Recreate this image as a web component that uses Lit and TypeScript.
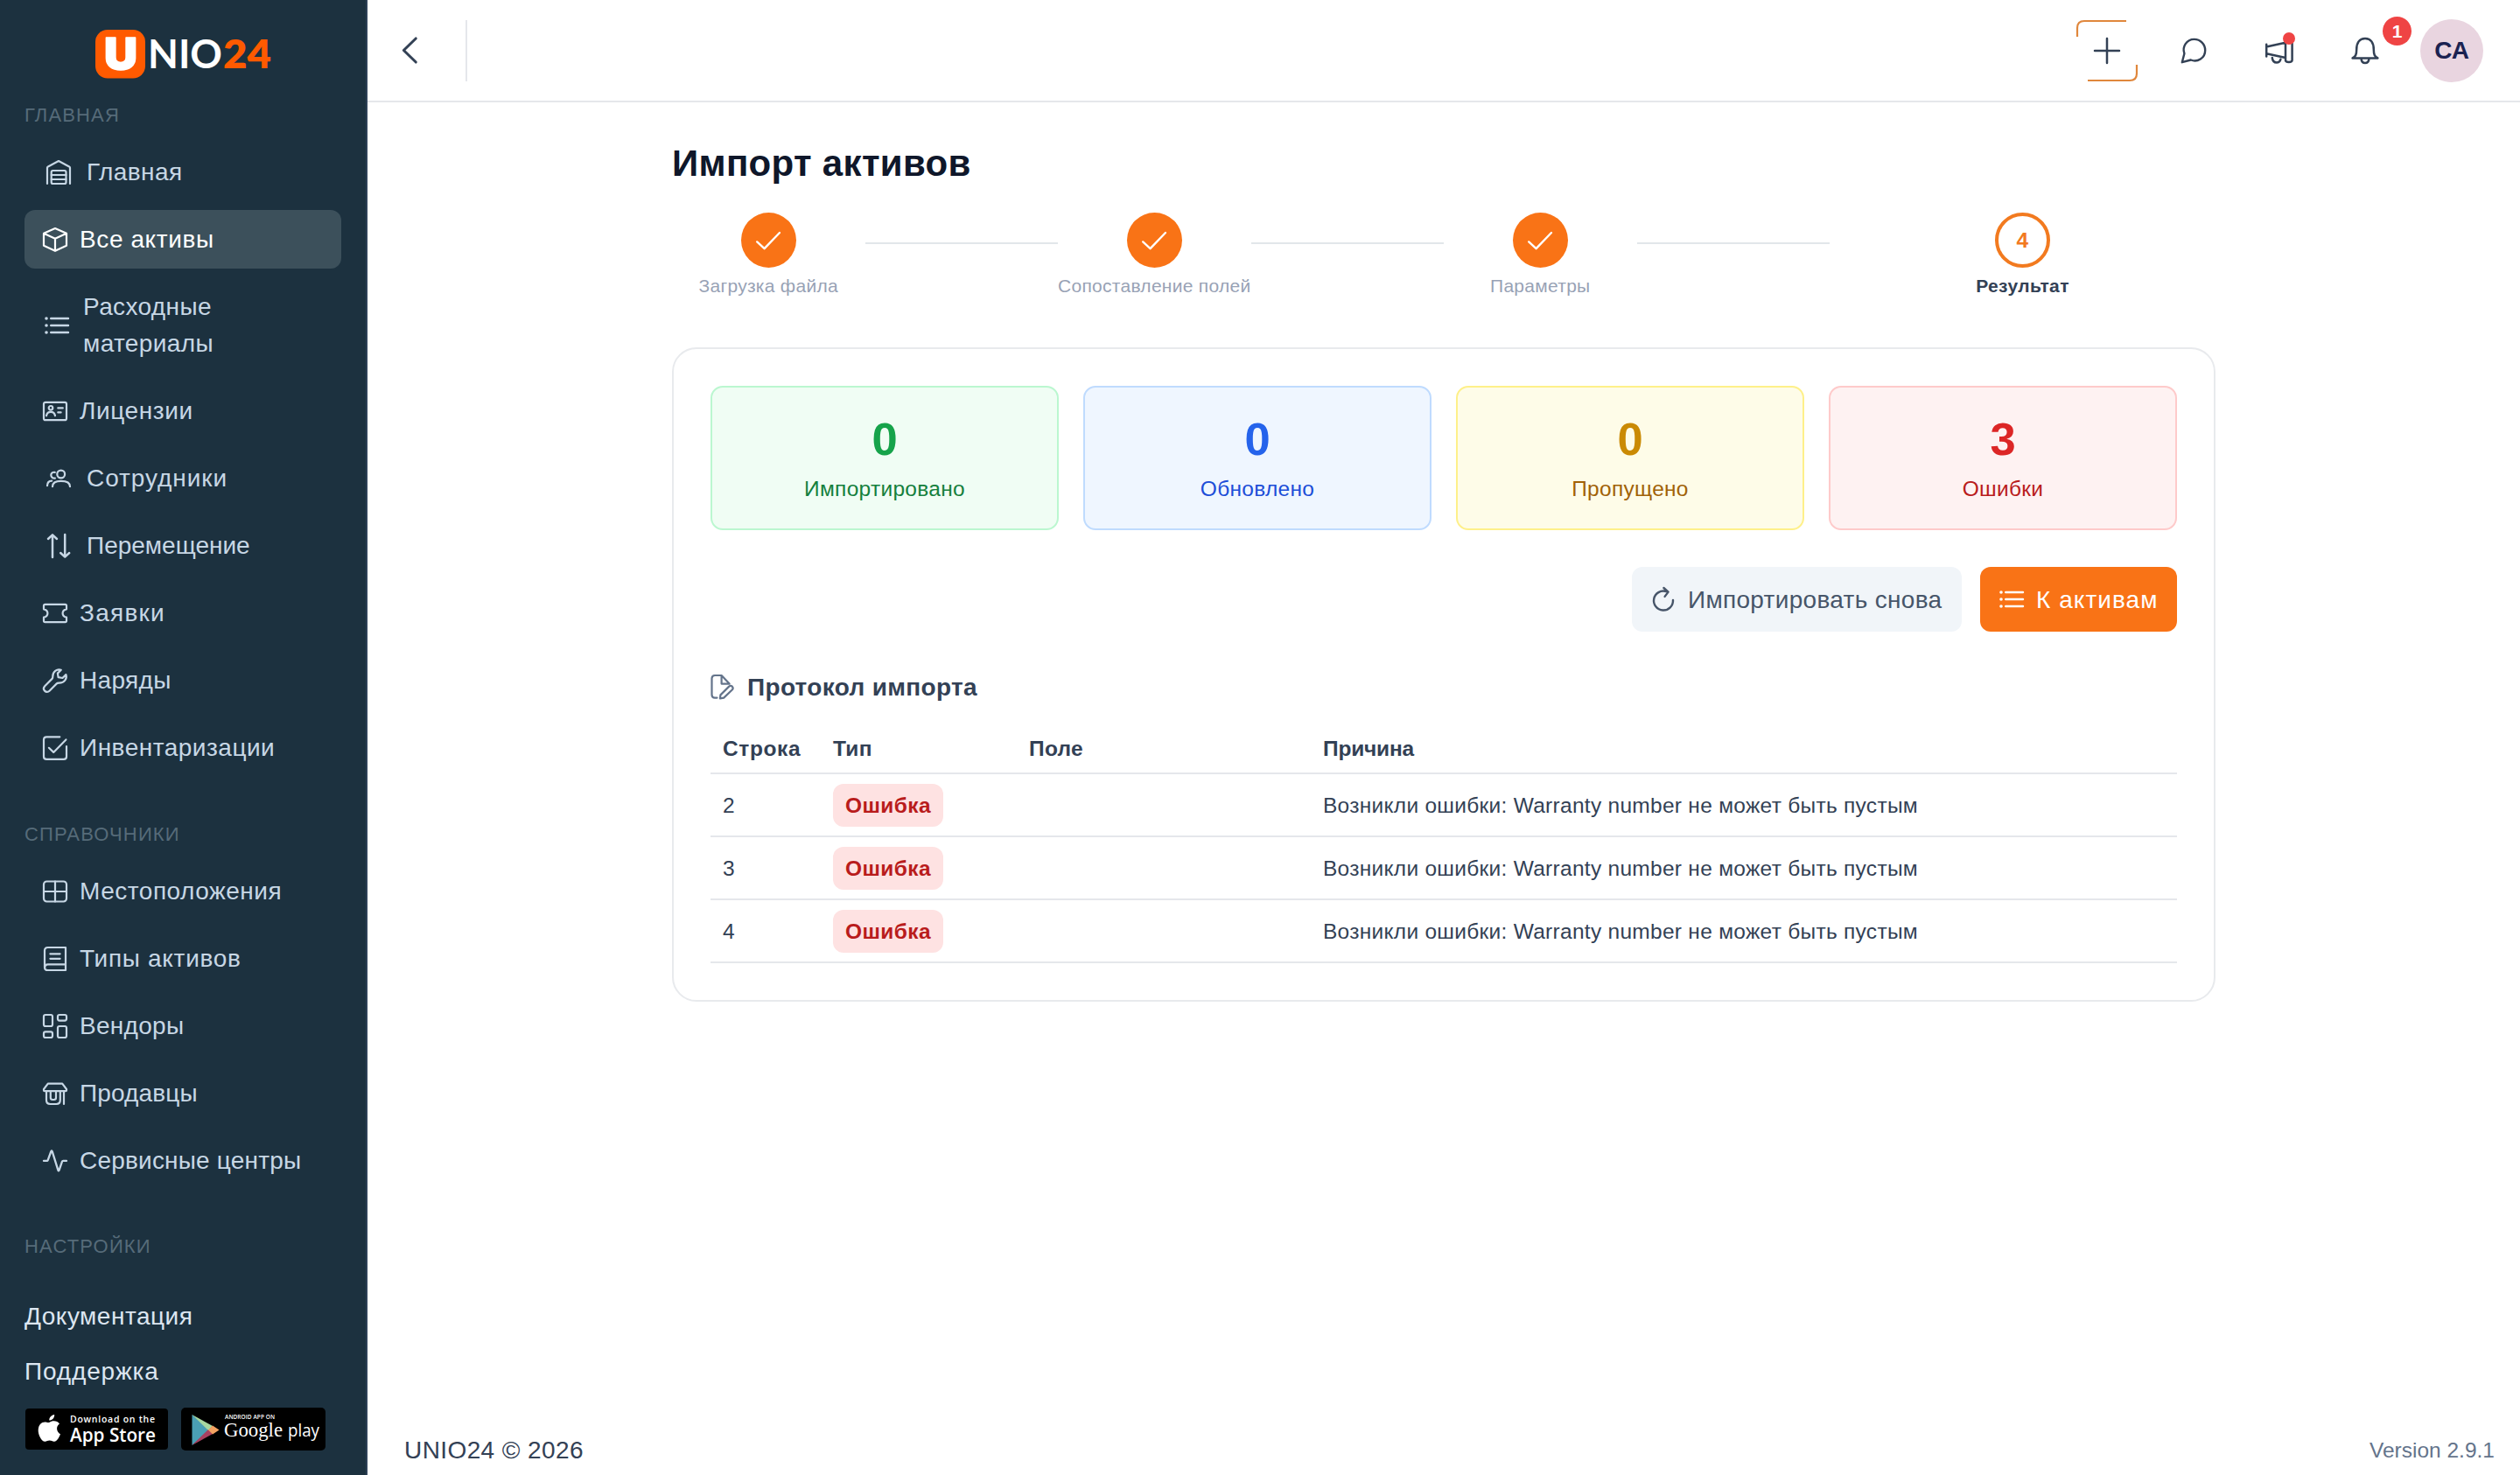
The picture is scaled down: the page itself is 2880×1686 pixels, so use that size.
import { LitElement, html, css, svg, TemplateResult, SVGTemplateResult } from "lit";
import { customElement } from "lit/decorators.js";
import { classMap } from "lit/directives/class-map.js";
import { styleMap } from "lit/directives/style-map.js";

const icon = (body: SVGTemplateResult, cls = "ic"): TemplateResult =>
  html`<svg class=${cls} viewBox="0 0 28 28" aria-hidden="true">${body}</svg>`;

const ICONS: Record<string, SVGTemplateResult> = {
  warehouse: svg`<path d="M1 27V8.8Q1 7.9 1.9 7.4L14 1.1L26.1 7.4Q27 7.9 27 8.8V27"/><rect x="5.7" y="12" width="16.8" height="15" rx="1.8"/><path d="M5.7 17H22.5M5.7 22H22.5"/>`,
  box: svg`<path d="M14 1.1L27 6.8V20.8L14 26.8L1 20.8V6.8ZM1 6.8L14 12.8L27 6.8M14 12.8V26.8"/>`,
  list: svg`<path d="M7.2 6H27M7.2 14H27M7.2 22H27" stroke-width="2.4"/><g fill="currentColor" stroke="none"><circle cx="2" cy="6" r="1.8"/><circle cx="2" cy="14" r="1.8"/><circle cx="2" cy="22" r="1.8"/></g>`,
  card: svg`<rect x="1" y="3.8" width="26" height="20.4" rx="2"/><circle cx="9" cy="10.3" r="2.3"/><path d="M4 19.2C4.6 15.8 6.5 14.8 9 14.8S13.4 15.8 14 19.2M17.3 10.4H22.8M17.3 15.4H20.6"/>`,
  users: svg`<circle cx="16.7" cy="9" r="4.4"/><path d="M7 23.2C7 18.6 11 16.9 16.7 16.9S27 18.6 27 23.2M9.9 13.6C7.4 14 5.3 12.4 5.3 10.1S7.4 6.3 9.7 6.9M1 22.2C1 18.6 2.8 16.8 6.2 16.6"/>`,
  swap: svg`<path d="M7 27V1.6M2 6L7 1.4L12 6M21.2 1V26.4M16.2 22L21.2 26.6L26.2 22" stroke-width="2.5"/>`,
  ticket: svg`<path d="M2.6 3.9H25.4Q27 3.9 27 5.5V9.3C24 9.9 22.6 11.7 22.6 14S24 18.1 27 18.7V22.5Q27 24.1 25.4 24.1H2.6Q1 24.1 1 22.5V18.7C4 18.1 5.4 16.3 5.4 14S4 9.9 1 9.3V5.5Q1 3.9 2.6 3.9Z"/>`,
  wrench: svg`<path d="M20.8 1.7C16 .3 11.1 3.6 11.3 9.3Q11.4 11 10.5 11.9L2.2 20.2C.6 21.8 .6 24 2 25.6C3.6 27.2 6 27.2 7.5 25.7L15.8 17.4Q16.7 16.5 18.4 16.6C24.6 16.8 28 11.7 26.4 7.1L22.5 11L17.6 10.2L16.9 5.6Z"/>`,
  check: svg`<path d="M19.3 1.3H4.2Q1 1.3 1 4.5V23.7Q1 26.9 4.2 26.9H23.8Q27 26.9 27 23.7V12.2M6.9 13.8L12.2 18.9L26.4 4.4"/>`,
  window: svg`<rect x="1" y="2.5" width="26" height="23" rx="3.4"/><path d="M14 2.5V25.5M1 14H27"/>`,
  book: svg`<path d="M26 1H5.6Q2 1 2 4.6V23.4Q2 27 5.6 27H26V1ZM2.2 24.2Q2.2 20.3 5.8 20.3H26M8.4 8.3H19.6M8.4 13.8H19.6"/>`,
  dash: svg`<rect x="1" y="1" width="10" height="13" rx="2"/><rect x="17" y="1" width="10" height="6.6" rx="2"/><rect x="1" y="20.4" width="10" height="6.6" rx="2"/><rect x="17" y="14" width="10" height="13" rx="2"/>`,
  store: svg`<path d="M5.8 2.7H22.2L27 9V10.6Q27 11.2 26 11.2H2Q1 11.2 1 10.6V9ZM4 11.2V21.6Q4 26 8.4 26H15.4Q19.8 26 19.8 21.6V11.2M8.8 11.2V18.8Q8.8 21 11 21H12.8Q15 21 15 18.8V11.2M24 11.2V26"/>`,
  pulse: svg`<path d="M1 13.9H4.8Q5.4 13.9 5.7 13.1L9.4 3Q10.1 1.8 10.7 3.2L17.4 24.7Q18 25.9 18.6 24.6L22 14.7Q22.3 13.9 23.2 13.9H27" stroke-width="2.3"/>`,
  tick: svg`<path d="M1.2 15.4L9.6 23.2L27 5" stroke-width="2.4"/>`,
  redo: svg`<path d="M25 14.9A11 11 0 1 1 17.4 5.1M14.4 1L19.6 5.6L15.6 10.9" stroke-width="2.4"/>`,
  file: svg`<path d="M7.5 26.6H5Q1.5 26.6 1.5 23V4.6Q1.5 1 5 1H12.6L21.6 10.6M12.6 1V10.6H21.6M11.4 23.4L21.2 13.6Q23 12.2 24.8 13.7Q26.4 15.4 25 17.3L15.2 26.6L10.9 27.4Z"/>`,
  back: svg`<path d="M21 0L6.6 14L21 28" stroke-width="3.2"/>`,
  plus: svg`<path d="M14 0V28M0 14H28" stroke-width="2.5"/>`,
  chat: svg`<path d="M.8 27.2L3.4 17.2C.6 9.4 6 .9 14.6 .9C21.8 .9 27.2 6.6 27.2 13.4C27.2 22.4 18.4 27.6 10.8 24.5Z" stroke-width="2.4"/>`,
  bell: svg`<path d="M-.4 22.4C3 20.6 4.2 18.6 4.2 12.6C4.2 5.2 7.4 0 14 0S23.8 5.2 23.8 12.6C23.8 18.6 25 20.6 28.400 22.4ZM9.5 22.8C9.8 26.4 11.6 28 14 28S18.2 26.4 18.5 22.8" stroke-width="2.5"/>`,
};

interface Item { label: string; icon: string; track: number; kind?: string; active?: boolean }

const MAIN: Item[] = [
  { label: "Главная", icon: "warehouse", track: 0.43, kind: "wide" },
  { label: "Все активы", icon: "box", track: 0.6, active: true },
  { label: "Расходные материалы", icon: "list", track: 0.38, kind: "mid" },
  { label: "Лицензии", icon: "card", track: 0.62 },
  { label: "Сотрудники", icon: "users", track: 0.95, kind: "wide" },
  { label: "Перемещение", icon: "swap", track: 0, kind: "wide" },
  { label: "Заявки", icon: "ticket", track: 1.25 },
  { label: "Наряды", icon: "wrench", track: 0.35 },
  { label: "Инвентаризации", icon: "check", track: 0.5 },
];
const REFS: Item[] = [
  { label: "Местоположения", icon: "window", track: 0.52 },
  { label: "Типы активов", icon: "book", track: 0.7 },
  { label: "Вендоры", icon: "dash", track: 0.3 },
  { label: "Продавцы", icon: "store", track: 0.15 },
  { label: "Сервисные центры", icon: "pulse", track: 0.2 },
];
const STEPS = ["Загрузка файла", "Сопоставление полей", "Параметры", "Результат"];
const STATS = [
  { n: 0, label: "Импортировано", tone: "green" },
  { n: 0, label: "Обновлено", tone: "blue" },
  { n: 0, label: "Пропущено", tone: "yellow" },
  { n: 3, label: "Ошибки", tone: "red" },
];
const ROWS = [2, 3, 4];
const REASON = "Возникли ошибки: Warranty number не может быть пустым";

@customElement("app-root")
export class AppRoot extends LitElement {
  static styles = css`
    :host { display: block; font-family: "Liberation Sans", Arial, sans-serif; font-size: 28px; color: #334155; }
    * { box-sizing: border-box; }
    svg { display: block; flex: none; fill: none; stroke: currentColor; stroke-width: 2.2; stroke-linecap: round; stroke-linejoin: round; overflow: visible; }
    .ic { width: 28px; height: 28px; }
    .app { display: flex; width: 2880px; height: 1686px; overflow: hidden; background: #fff; }
    .side { width: 420px; flex: none; background: #1c313f; border-right: 2px solid #2d4157; display: flex; flex-direction: column; color: #c7d7e5; }
    .logo { height: 114px; padding: 34px 0 0 109px; }
    .logo svg { width: 202px; height: 56px; stroke: none; }
    .u { font: 900 50px Inter, sans-serif; fill: #fff; stroke: #fff; stroke-width: 1.5px; }
    .nio { font: 700 46px Lato, sans-serif; fill: #fff; }
    .n24 { font: 800 46px Lato, sans-serif; fill: #ff5a00; }
    .sec { padding-left: 28px; font-size: 22px; line-height: 36px; color: #566b79; letter-spacing: 1.15px; }
    .nav { padding: 13px 28px 0; display: flex; flex-direction: column; gap: 10px; }
    .item { display: flex; align-items: center; gap: 14px; min-height: 67px; padding: 12.5px 21px; line-height: 42px; border-radius: 12px; width: 362px; }
    .item.wide { padding-left: 25px; gap: 18px; }
    .item.mid { padding-left: 23px; gap: 16px; }
    .item.mid span { width: 180px; }
    .item.active { background: #3c505b; color: #fff; }
    .sec.second { margin-top: 48px; }
    .sec.third { margin-top: 47px; }
    .links { padding: 41px 28px 0; display: flex; flex-direction: column; gap: 21px; line-height: 42px; color: #dce6f1; letter-spacing: 0.5px; }
    .links .wider { letter-spacing: 0.85px; }
    .stores { display: flex; align-items: center; gap: 15px; padding: 20px 0 0 27px; }
    .stores svg { stroke: none; }
    .as { width: 163px; height: 47px; margin-left: 2px; }
    .gp { width: 165px; height: 49px; }
    .st { font-family: "Open Sans", sans-serif; font-weight: 600; fill: #fff; }
    .st.thin { font-weight: 400; }
    .st.serif { font-family: "Liberation Serif", serif; font-weight: 400; }
    .main { flex: 1; display: flex; flex-direction: column; }
    .top { height: 117px; flex: none; border-bottom: 2px solid #e5e7eb; display: flex; align-items: center; padding: 0 42px 0 35px; }
    .top .back { width: 27px; height: 27px; }
    .sep { width: 2px; height: 70px; background: #e5e7eb; margin-left: 50px; margin-right: auto; }
    .plus { width: 70px; height: 70px; display: grid; place-items: center; position: relative; margin-right: 50px; }
    .plus .frame { position: absolute; inset: 0; width: 70px; height: 70px; stroke: #e0873c; stroke-linecap: butt; }
    .hornbox, .bellbox { position: relative; }
    .hornbox { margin: 0 68px; }
    .horn { width: 32px; height: 28px; stroke-width: 2.5; }
    .dot { position: absolute; width: 14px; height: 14px; border-radius: 50%; background: #ef4444; left: 20px; top: -7px; }
    .badge { position: absolute; width: 33px; height: 33px; border-radius: 50%; background: #ef4444; color: #fff; font-weight: 700; font-size: 21px; line-height: 33px; text-align: center; left: 34px; top: -25px; }
    .avatar { width: 72px; height: 72px; border-radius: 50%; background: #e9d5e0; color: #1b2251; font-weight: 700; font-size: 28px; line-height: 72px; text-align: center; margin-left: 49px; }
    .content { width: 1764px; margin: 0 auto; flex: 1; }
    h1 { margin: 45px 0 0; font-size: 42px; line-height: 50px; color: #0f172a; font-weight: 700; letter-spacing: 0.32px; }
    .steps { display: grid; grid-template-columns: repeat(4, 1fr); margin-top: 31px; }
    .step { display: flex; }
    .cell { flex: 1; display: flex; flex-direction: column; align-items: center; font-size: 21px; line-height: 28px; color: #98a2b5; white-space: nowrap; letter-spacing: 0.28px; }
    .circle { width: 63px; height: 63px; border-radius: 50%; background: #f97316; color: #fff; display: grid; place-items: center; margin-bottom: 7px; font-size: 24.5px; font-weight: 700; }
    .circle.now { background: #fff; border: 4px solid #f27a1f; color: #f27a1f; }
    .cell.cur { color: #334155; font-weight: 700; letter-spacing: 0.39px; }
    .line { flex: 1; height: 2px; background: #e2e6ea; margin-top: 34px; }
    .card { margin-top: 56px; border: 2px solid #e8eaed; border-radius: 28px; padding: 42px; }
    .stats { display: grid; grid-template-columns: repeat(4, 1fr); gap: 28px; }
    .stat { height: 165px; border: 2px solid; border-radius: 14px; padding: 28px 0; text-align: center; }
    .num { font-size: 52.5px; line-height: 61px; font-weight: 700; }
    .cap { margin-top: 9px; font-size: 24.5px; line-height: 35px; letter-spacing: 0.28px; }
    .green { background: #f0fdf4; border-color: #bbf7d0; color: #15803d; } .green .num { color: #16a34a; }
    .blue { background: #eff6ff; border-color: #bfdbfe; color: #1d4ed8; } .blue .num { color: #2563eb; }
    .yellow { background: #fefce8; border-color: #fef08a; color: #a16207; } .yellow .num { color: #ca8a04; }
    .red { background: #fef2f2; border-color: #fecaca; color: #b91c1c; } .red .num { color: #dc2626; }
    .actions { display: flex; justify-content: flex-end; gap: 21px; margin-top: 42px; }
    .btn { height: 74px; border-radius: 12px; display: flex; align-items: center; gap: 14px; padding: 0 22px; background: #f1f5f9; color: #475569; white-space: nowrap; }
    .btn span { padding-top: 1px; }
    .btn.again { width: 377px; letter-spacing: 0.31px; }
    .btn.go { background: #f97316; color: #fff; width: 225px; letter-spacing: 1.05px; }
    .proto { display: flex; align-items: center; gap: 14px; margin-top: 42px; height: 42px; font-weight: 700; letter-spacing: 0.33px; }
    .proto span { padding-top: 1px; }
    .proto svg { color: #64748b; }
    .table { margin-top: 21px; font-size: 24.5px; line-height: 35px; letter-spacing: 0.28px; }
    .row { display: grid; grid-template-columns: 126px 224px 336px 1fr; align-items: center; height: 72px; border-bottom: 2px solid #e5e7eb; white-space: nowrap; }
    .row > span { padding-left: 14px; }
    .row.head { height: 58px; font-weight: 700; }
    .row.head span:first-child { letter-spacing: 0.6px; }
    .row.head span:last-child { letter-spacing: -0.2px; }
    .pill { display: block; width: 126px; height: 49px; line-height: 49px; border-radius: 12px; background: #fee2e2; color: #b91c1c; font-weight: 700; text-align: center; letter-spacing: 0.4px; }
    .foot { display: flex; justify-content: space-between; align-items: center; padding: 0 29px 0 42px; height: 57px; letter-spacing: 0.41px; }
    .ver { font-size: 24.5px; color: #64748b; letter-spacing: 0; }
  `;

  private nav(items: Item[]) {
    return html`<nav class="nav">${items.map(
      (i) => html`<a class=${classMap({ item: true, active: !!i.active, wide: i.kind === "wide", mid: i.kind === "mid" })}>${icon(ICONS[i.icon])}<span style=${styleMap({ letterSpacing: `${i.track}px` })}>${i.label}</span></a>`
    )}</nav>`;
  }

  render() {
    return html`
      <div class="app">
        <aside class="side">
          <div class="logo">
            <svg viewBox="0 0 202 56"><rect width="57" height="55.5" rx="14" fill="#ff5a00"/>
              <text class="u" x="10" y="45" textLength="38" lengthAdjust="spacingAndGlyphs">U</text>
              <text class="nio" x="60" y="44" textLength="85" lengthAdjust="spacingAndGlyphs">NIO</text>
              <text class="n24" x="146" y="44" textLength="55" lengthAdjust="spacingAndGlyphs">24</text></svg>
          </div>
          <div class="sec">ГЛАВНАЯ</div>
          ${this.nav(MAIN)}
          <div class="sec second">СПРАВОЧНИКИ</div>
          ${this.nav(REFS)}
          <div class="sec third">НАСТРОЙКИ</div>
          <div class="links"><a>Документация</a><a class="wider">Поддержка</a></div>
          <div class="stores">
            <svg class="as" viewBox="0 0 163 47"><rect width="163" height="47" rx="4" fill="#000"/>
              <path fill="#fff" d="M28 15.5C31 13.9 36.5 13.5 39 17.6C34.6 20.4 35.4 27 40 29.3C38.4 33.4 35.8 38 32.8 37.7C30.6 37.5 29.9 36.5 27.6 36.5S24.5 37.6 22.5 37.7C18.4 37.9 14.4 29.5 14.7 24.4C15 18.4 18.5 15.4 22.2 15.4C24.6 15.4 26 16.7 28 15.5ZM27.3 13.6C27 10.4 29.8 7.2 33.2 6.9C33.5 10.4 30.6 13.5 27.3 13.6Z"/>
              <text class="st" x="51" y="16" font-size="10.5" textLength="97">Download on the</text>
              <text class="st" x="51" y="38" font-size="21.5" textLength="98" lengthAdjust="spacingAndGlyphs">App Store</text></svg>
            <svg class="gp" viewBox="0 0 165 49"><rect width="165" height="49" rx="5" fill="#000"/>
              <path fill="#4a9fb5" d="M12.5 8V43L33 25.5Z"/><path fill="#a8d8a0" d="M12.5 8L36 21L31 26Z"/><path fill="#a84060" d="M12.5 43L36 30L31 25Z"/><path fill="#f4a261" d="M36 20.5L43.5 25.5L36 30.5L31 25.5Z"/>
              <text class="st" x="50" y="12.5" font-size="6.5" textLength="57">ANDROID APP ON</text>
              <text class="st serif" x="49" y="33" font-size="24" textLength="67" lengthAdjust="spacingAndGlyphs">Google</text>
              <text class="st thin" x="122" y="33" font-size="20" textLength="36" lengthAdjust="spacingAndGlyphs">play</text></svg>
          </div>
        </aside>
        <main class="main">
          <header class="top">
            ${icon(ICONS.back, "back")}
            <div class="sep"></div>
            <div class="plus"><svg class="frame" viewBox="0 0 70 70"><path d="M1 19V9Q1 1 9 1H57M69 51V61Q69 69 61 69H13"/></svg>${icon(ICONS.plus)}</div>
            ${icon(ICONS.chat)}
            <div class="hornbox">
              <svg class="horn" viewBox="0 0 32 28"><path d="M1.2 6.8V20.4M1.2 9.5L23 4.8M1.2 17.3L23 22M23 2V24.8Q23 27 26.8 27Q30.6 27 30.6 24.8V2ZM7.8 22Q8.4 27.5 12.8 27.5Q16.6 27.5 17.4 23.8"/></svg>
              <i class="dot"></i>
            </div>
            <div class="bellbox">${icon(ICONS.bell)}<span class="badge">1</span></div>
            <div class="avatar">СА</div>
          </header>
          <section class="content">
            <h1>Импорт активов</h1>
            <div class="steps">${STEPS.map((s, i) => html`<div class="step">
              <div class=${classMap({ cell: true, cur: i === 3 })}><div class=${classMap({ circle: true, now: i === 3 })}>${i === 3 ? "4" : icon(ICONS.tick)}</div>${s}</div>
              ${i < 3 ? html`<div class="line"></div>` : ""}</div>`)}</div>
            <div class="card">
              <div class="stats">${STATS.map((s) => html`<div class="stat ${s.tone}"><div class="num">${s.n}</div><div class="cap">${s.label}</div></div>`)}</div>
              <div class="actions"><div class="btn again">${icon(ICONS.redo)}<span>Импортировать снова</span></div><div class="btn go">${icon(ICONS.list)}<span>К активам</span></div></div>
              <div class="proto">${icon(ICONS.file)}<span>Протокол импорта</span></div>
              <div class="table">
                <div class="row head"><span>Строка</span><span>Тип</span><span>Поле</span><span>Причина</span></div>
                ${ROWS.map((r) => html`<div class="row"><span>${r}</span><span><b class="pill">Ошибка</b></span><span></span><span>${REASON}</span></div>`)}
              </div>
            </div>
          </section>
          <footer class="foot"><span>UNIO24 © 2026</span><span class="ver">Version 2.9.1</span></footer>
        </main>
      </div>`;
  }
}
